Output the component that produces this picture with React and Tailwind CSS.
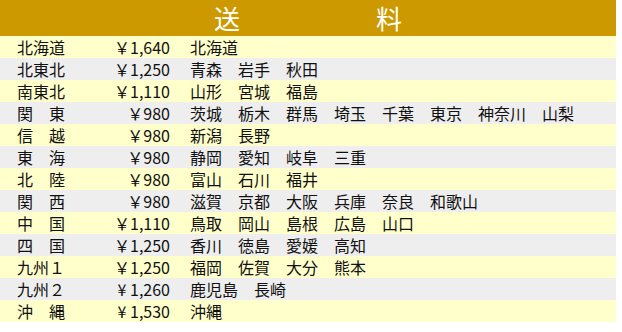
const ROWS = [
  { area: "北海道", price: "￥1,640", prefs: "北海道" },
  { area: "北東北", price: "￥1,250", prefs: "青森　岩手　秋田" },
  { area: "南東北", price: "￥1,110", prefs: "山形　宮城　福島" },
  { area: "関　東", price: "￥980", prefs: "茨城　栃木　群馬　埼玉　千葉　東京　神奈川　山梨" },
  { area: "信　越", price: "￥980", prefs: "新潟　長野" },
  { area: "東　海", price: "￥980", prefs: "静岡　愛知　岐阜　三重" },
  { area: "北　陸", price: "￥980", prefs: "富山　石川　福井" },
  { area: "関　西", price: "￥980", prefs: "滋賀　京都　大阪　兵庫　奈良　和歌山" },
  { area: "中　国", price: "￥1,110", prefs: "鳥取　岡山　島根　広島　山口" },
  { area: "四　国", price: "￥1,250", prefs: "香川　徳島　愛媛　高知" },
  { area: "九州１", price: "￥1,250", prefs: "福岡　佐賀　大分　熊本" },
  { area: "九州２", price: "¥ 1,260", prefs: "鹿児島　長崎" },
  { area: "沖　縄", price: "¥ 1,530", prefs: "沖縄" },
];

export default function App() {
  return (
    <div className="w-[622px] h-[332px] bg-white font-['Noto_Sans_CJK_JP',sans-serif] text-[#111]">
      <div className="w-[616px]">
        {/* header */}
        <div className="h-[36px] bg-[#cc9900] flex justify-center items-end gap-[136px] pb-[1px] text-white text-[26px] leading-[34px]">
          <span>送</span>
          <span>料</span>
        </div>

        {ROWS.map((r, i) => (
          <div key={r.area}
            className={`grid grid-cols-[82px_88px_1fr] h-[22px] items-center text-[16px] leading-[22px] whitespace-nowrap ${i % 2 === 0 ? "bg-[#ffffcc]" : "bg-[#eeeeee]"}`}>
            <span className="text-center">{r.area}</span>
            <span className="text-right">{r.price}</span>
            <span className="pl-[20px]">{r.prefs}</span>
          </div>
        ))}
      </div>
    </div>
  );
}
